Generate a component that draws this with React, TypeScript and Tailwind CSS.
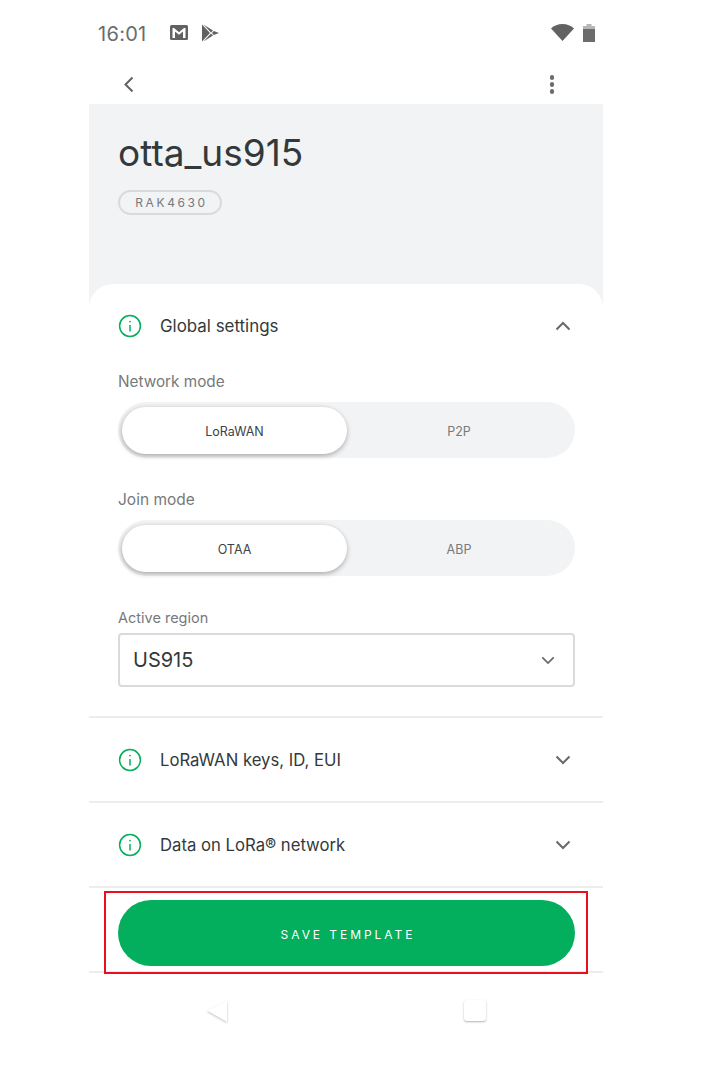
import type { ReactNode } from "react";

function InfoIcon() {
  return (
    <svg width="24" height="24" viewBox="0 0 24 24" fill="none" stroke="#03ae5c" className="shrink-0">
      <circle cx="12" cy="12" r="10.4" strokeWidth="1.5" />
      <path d="M12 11v6.5" strokeWidth="1.5" />
      <circle cx="12" cy="7.6" r="0.9" fill="#03ae5c" stroke="none" />
    </svg>
  );
}

function Chevron({ up, small }: { up?: boolean; small?: boolean }) {
  return (
    <svg
      width={small ? 14 : 16}
      height={small ? 9 : 10}
      viewBox="0 0 16 10"
      fill="none"
      stroke="#666a6c"
      strokeWidth="2"
      className="shrink-0"
    >
      <path d={up ? "M1.5 8.5 8 2l6.5 6.5" : "M1.5 1.5 8 8l6.5-6.5"} />
    </svg>
  );
}

function Toggle({ on, off }: { on: string; off: string }) {
  return (
    <div className="flex h-[56px] w-[457px] items-center rounded-[28px] bg-[#f2f3f5] pl-[4px]">
      <div className="flex h-[47px] w-[225px] items-center justify-center rounded-[24px] bg-white pt-[5px] text-[12.5px] text-[#3c4244] shadow-[0_2px_5px_rgba(0,0,0,0.28),-2px_0_5px_rgba(0,0,0,0.06)]">
        {on}
      </div>
      <div className="flex-1 pr-[4px] pt-[5px] text-center text-[12.5px] text-[#77797b]">{off}</div>
    </div>
  );
}

function Section({ title, children }: { title: ReactNode; children?: ReactNode }) {
  return (
    <div className="flex h-[85px] items-center border-b-2 border-[#ededee] pl-[29px] pr-[32px]">
      <InfoIcon />
      <span className="ml-[18px] flex-1 pt-[2px] text-[16.7px] font-normal text-[#33393b]">{title}</span>
      {children}
    </div>
  );
}

export default function App() {
  return (
    <div className="relative h-[1080px] w-[715px] overflow-hidden bg-white font-['Inter',sans-serif]">
      <div className="ml-[89px] w-[514px]">
        {/* status bar */}
        <div className="flex h-[65px] items-center pl-[9px] pr-[8px]">
          <span className="pt-[2px] text-[20px] tracking-[0.3px] text-[#6a6c6e]">16:01</span>
          <svg width="18" height="15" viewBox="0 0 18 15" className="ml-[23px]">
            <rect width="18" height="15" rx="1.5" fill="#606264" />
            <path d="M2.500 13V3h1.500L9 7.200 14 3h1.500v10H13V6.500L9 9.800 5 6.500V13z" fill="#fff" />
          </svg>
          <svg width="18" height="18" viewBox="0 0 18 18" className="ml-[13px]">
            <path d="M1 0.500v17l8-8.500z" fill="#606264" />
            <path d="M2.500 0.500 12 6.500l-2 2zM2.500 17.500 12 11.500l-2-2zM12.800 7 18 9l-5.200 2L11 9z" fill="#606264" />
          </svg>
          <div className="flex-1" />
          <svg width="23" height="17" viewBox="0 0 23 17">
            <path d="M11.500 17 0 4.500C3 1.500 7 0 11.500 0S20 1.500 23 4.500z" fill="#606264" />
          </svg>
          <svg width="12" height="18" viewBox="0 0 12 18" className="ml-[9px]">
            <path d="M3.500 0h5v2H12v16H0V2h3.500z" fill="#b5b6b7" />
            <rect y="5" width="12" height="13" fill="#6a6c6e" />
          </svg>
        </div>

        {/* toolbar */}
        <div className="flex h-[39px] items-center justify-between pl-[34px] pr-[49px]">
          <svg width="11" height="17" viewBox="0 0 11 17" fill="none" stroke="#606264" strokeWidth="2">
            <path d="M9.500 1.500 2.500 8.500l7 7" />
          </svg>
          <div className="flex flex-col gap-[2.500px]">
            <span className="h-[4.500px] w-[4.500px] rounded-full bg-[#666a6c]" />
            <span className="h-[4.500px] w-[4.500px] rounded-full bg-[#666a6c]" />
            <span className="h-[4.500px] w-[4.500px] rounded-full bg-[#666a6c]" />
          </div>
        </div>

        {/* header */}
        <div className="h-[200px] bg-[#f2f3f5] pl-[29px] pt-[26px]">
          <h1 className="text-[37px] font-normal leading-[46px] text-[#33393b]">otta_us915</h1>
          <span className="mt-[14px] inline-flex h-[25px] w-[104px] items-center justify-center rounded-full border-2 border-[#d9dadb] pl-[3px] pt-[1px] text-[12px] tracking-[2.6px] text-[#77797b]">
            RAK4630
          </span>
        </div>

        {/* settings card */}
        <div className="relative -mt-[20px] rounded-t-[24px] bg-white">
          <div className="flex h-[84px] items-center pl-[29px] pr-[32px]">
            <InfoIcon />
            <span className="ml-[18px] flex-1 pt-[2px] text-[16.9px] text-[#33393b]">Global settings</span>
            <Chevron up />
          </div>

          <div className="border-b-2 border-[#ededee] pb-[29px] pl-[29px]">
            <p className="mb-[9px] mt-[3px] text-[15.3px] leading-[22px] text-[#77797b]">Network mode</p>
            <Toggle on="LoRaWAN" off="P2P" />
            <p className="mb-[9px] mt-[31px] text-[15.5px] leading-[22px] text-[#77797b]">Join mode</p>
            <Toggle on="OTAA" off="ABP" />
            <p className="mb-[4px] mt-[31px] text-[14.5px] leading-[22px] text-[#77797b]">Active region</p>
            <div className="flex h-[54px] w-[457px] items-center justify-between rounded-[4px] border-2 border-[#d9dadb] pl-[13px] pr-[18px]">
              <span className="text-[20px] text-[#33393b]">US915</span>
              <Chevron small />
            </div>
          </div>

          <Section title="LoRaWAN keys, ID, EUI">
            <Chevron />
          </Section>
          <Section title="Data on LoRa® network">
            <Chevron />
          </Section>

          {/* save bar */}
          <div className="flex h-[85px] items-start justify-center border-b-2 border-[#ededee] pl-[29px] pr-[28px] pt-[12px]">
            <button
              type="button"
              className="h-[66px] w-full rounded-[33px] bg-[#03ae5c] pl-[3px] pt-[3px] text-[12px] font-normal tracking-[2.95px] text-white"
            >
              SAVE TEMPLATE
            </button>
          </div>
        </div>

        {/* nav bar */}
        <div className="flex items-start pl-[116px] pt-[27px]">
          <svg width="24" height="24" viewBox="0 0 24 24" className="drop-shadow-[0_1px_1px_rgba(0,0,0,0.25)]">
            <path d="M22 1v21L2 10.500z" fill="#fff" />
          </svg>
          <div className="ml-[235px] h-[21px] w-[22px] rounded-[3px] bg-white shadow-[0_1px_2px_rgba(0,0,0,0.3)]" />
        </div>
      </div>

      {/* annotation over the save bar */}
      <div className="absolute left-[104px] top-[891px] h-[83px] w-[484px] border-2 border-[#e8101c]" />
    </div>
  );
}
